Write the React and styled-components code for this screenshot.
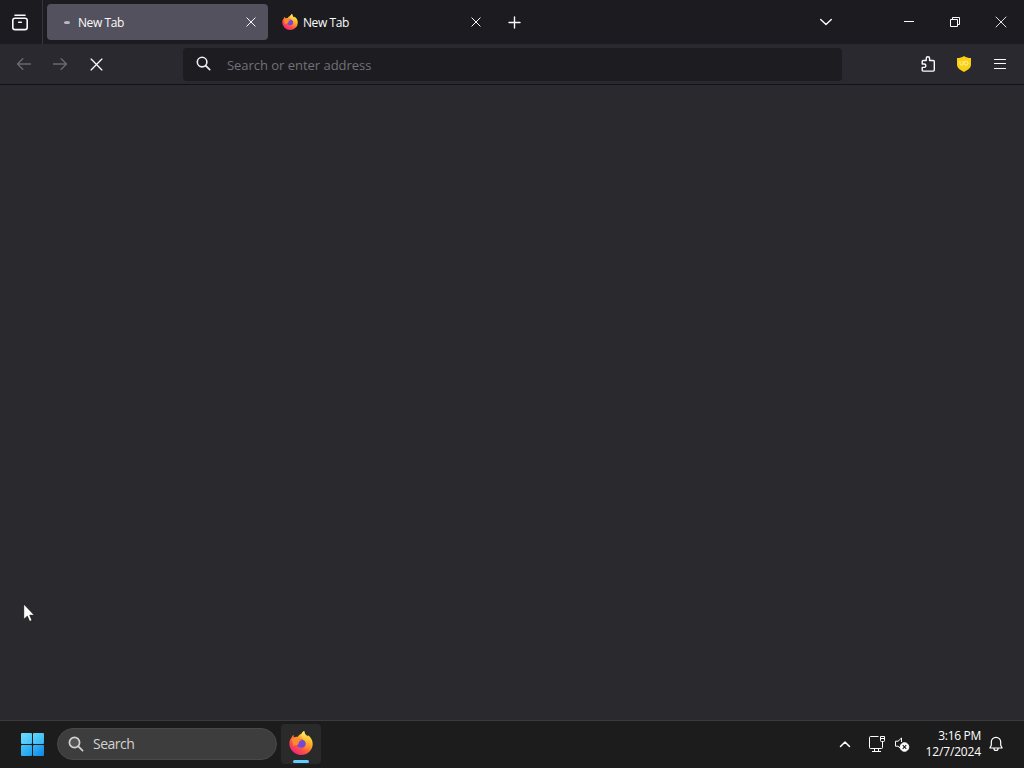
import React from 'react'
import styled, {createGlobalStyle} from 'styled-components'

const GlobalStyle = createGlobalStyle`
    * {
        box-sizing: border-box;
    }

    body {
        margin: 0;
        background: #2a292e;
        font-family: "Open Sans", "Noto Sans", sans-serif;
        overflow: hidden;
    }

    svg {
        display: block;
        flex: none;
    }
`

const Screen = styled.div`
    width: 1024px;
    height: 768px;
    display: flex;
    flex-direction: column;
    background: #2a292e;
`

const TabBar = styled.div`
    display: flex;
    height: 44px;
    background: #1c1b1f;
`

const FirefoxView = styled.div`
    display: flex;
    width: 43px;
    padding: 14px 0 0 11px;
    border-right: 1px solid #36353f;
`

const Tab = styled.div`
    display: flex;
    align-items: center;
    width: 221px;
    height: 36px;
    margin: 4px 0 0 4px;
    padding: 0 12px 0 10px;
    border-radius: 4px;
    background: ${props => props.$active ? '#53515d' : 'transparent'};
    color: #fbfbfe;
`

const TabIcon = styled.span`
    display: flex;
    align-items: center;
    justify-content: center;
    width: 16px;
    height: 16px;
    margin-right: 5px;
`

const Throbber = styled.i`
    width: 6px;
    height: 3px;
    margin-left: 3px;
    border-radius: 50%;
    background: #b9b8c4;
`

const TabTitle = styled.span`
    flex: 1;
    font-size: 12px;
    line-height: 18px;
    padding-top: 1px;
    letter-spacing: -0.42px;
`

const BarButton = styled.div`
    display: flex;
    align-items: center;
    justify-content: center;
    width: ${props => props.$width || 36}px;
    height: ${props => props.$height || 44}px;
    color: ${props => props.$muted ? '#69686f' : '#fbfbfe'};
`

const Spacer = styled.div`
    flex: 1;
`

const Toolbar = styled.div`
    display: flex;
    align-items: center;
    height: 41px;
    padding: 0 6px;
    background: #2a292f;
    border-bottom: 1px solid #131216;
`

const AddressBar = styled.div`
    display: flex;
    align-items: center;
    width: 659px;
    height: 33px;
    margin: 1px 0 0 69px;
    padding-left: 13px;
    border-radius: 4px;
    background: #1d1c21;
    color: #f0f0f4;

    svg {
        margin-bottom: 2px;
    }
`

const Placeholder = styled.span`
    margin-left: 16px;
    padding-top: 1px;
    font-size: 13px;
    line-height: 20px;
    letter-spacing: -0.03px;
    color: #727177;
`

const Page = styled.main`
    flex: 1;
    background: #2a292e;
`

const Taskbar = styled.footer`
    display: flex;
    height: 48px;
    padding-left: 21px;
    background: #1c1c1c;
    border-top: 1px solid #3b3b3f;
    color: #ffffff;
`

const StartLogo = styled.div`
    display: grid;
    grid-template-columns: 11px 11px;
    grid-template-rows: 11px 11px;
    gap: 1px;
    margin: 12px 13px 0 0;
`

const Pane = styled.i`
    border-radius: 1px;
    background: linear-gradient(135deg, ${props => props.$from}, ${props => props.$to});
`

const SearchBox = styled.div`
    display: flex;
    align-items: center;
    width: 220px;
    height: 32px;
    margin-top: 7px;
    padding: 0 0 1px 10px;
    border-radius: 16px;
    background: #3d3d3d;
    border: 1px solid #484848;
    color: #d2d2d2;
    font-size: 14px;
    letter-spacing: -0.5px;

    svg {
        margin-right: 9px;
    }
`

const TaskButton = styled.div`
    display: flex;
    flex-direction: column;
    align-items: center;
    width: 40px;
    height: 40px;
    margin: 3px 0 0 4px;
    padding-top: 7px;
    border-radius: 4px;
    background: #2a2a2a;
`

const Indicator = styled.i`
    width: 16px;
    height: 3px;
    margin-top: 5px;
    border-radius: 2px;
    background: #60cdff;
`

const Tray = styled.div`
    display: flex;
    align-items: center;
    padding: 0 20px 2px 0;
`

const TrayIcon = styled.span`
    margin-right: ${props => props.$gap}px;
`

const Clock = styled.div`
    width: 72px;
    margin-right: 7px;
    text-align: right;
    font-size: 12px;
    line-height: 16px;
    letter-spacing: -0.15px;
    white-space: nowrap;
`

const TimeText = styled.div`
    letter-spacing: -0.3px;
`

const Cursor = styled.svg`
    position: absolute;
    left: 23px;
    top: 603px;
`

const Cross = ({size, stroke = 1}) =>
    <svg width={size} height={size} viewBox="0 0 12 12" fill="none" stroke="currentColor" strokeWidth={stroke * 12 / size} strokeLinecap="round">
        <path d="M1 1l10 10M11 1L1 11" />
    </svg>

const Arrow = ({flip}) =>
    <svg width="16" height="16" viewBox="0 0 16 16" fill="none" stroke="currentColor" strokeWidth="1.4" strokeLinecap="round" strokeLinejoin="round">
        <path d={flip ? 'M1.5 8h13M9.2 2.700l5.300 5.300-5.300 5.300' : 'M14.500 8H1.500M6.800 2.700L1.500 8l5.300 5.300'} />
    </svg>

const Magnifier = ({size, fill = 'none'}) =>
    <svg width={size} height={size} viewBox="0 0 16 16" fill="none" stroke="currentColor" strokeWidth="1.7" strokeLinecap="round">
        <circle cx="6.5" cy="6.5" r="5.1" fill={fill} />
        <path d="M10.3 10.3l4.3 4.3" />
    </svg>

const FirefoxLogo = ({size, id}) =>
    <svg width={size} height={size} viewBox="0 0 24 24">
        <defs>
            <linearGradient id={`${id}-body`} x1="0.85" y1="0.1" x2="0.25" y2="0.95">
                <stop offset="0" stopColor="#fff04a" />
                <stop offset="0.35" stopColor="#ffa72a" />
                <stop offset="0.65" stopColor="#ff5a3c" />
                <stop offset="1" stopColor="#f0257b" />
            </linearGradient>
            <linearGradient id={`${id}-flame`} x1="0.6" y1="0" x2="0.5" y2="1">
                <stop offset="0" stopColor="#fff46a" />
                <stop offset="0.5" stopColor="#ffbd2e" />
                <stop offset="1" stopColor="#ff7a30" />
            </linearGradient>
        </defs>
        <path
            d="M4.7 4.1c-.2 1 0 1.900.1 2.500C6 5.900 7.300 5.700 8.500 6c1.200-2.200 3.100-2.900 4-3.300C13.200 1.200 14.300.5 15.200 0c.1 2.900 1.700 3.900 3.200 5.400.4-.5.4-1 .3-1.500 3.200 2 5 5.400 5 9A11.700 11 0 0 1 12 24 11.700 11.500 0 0 1 .4 12.500c0-3.400 1.400-5.100 2.400-6.300.3-1 .9-1.700 1.900-2.100z"
            fill={`url(#${id}-body)`}
        />
        <path
            d="M15.200 0c.1 2.900 1.700 3.900 3.200 5.400 2.200 2.200 3 5.400 1.900 8.500-1.100 3.300-4.100 5.200-7.400 5.100 3.500-1.300 5.400-4.300 4.500-7.100C16.500 8.800 12.300 8 12.300 4.200 12.400 2.500 13.500 1 15.200 0z"
            fill={`url(#${id}-flame)`}
        />
        <path
            d="M7.500 10.500c.7-1.600 2.300-2.300 4.200-2.100 3 0 5 1.700 5 4.200 0 2.500-1.900 4.200-4.500 4.200s-4.700-1.700-4.700-4.200z"
            fill="#7448d8"
        />
        <path d="M3 8.200c1.700-1.500 3.800-1.900 5.700-1.200.8 1.300 2.100 1.500 3.900 1.600-.1 1.300-1.800 1.500-2.600 2.300-.8.9.2 1.800-1.200 2.800-1.500 1-3.400.1-4.400 1.500z" fill="#ff8a2c" />
    </svg>

const App = () =>
    <Screen>
        <GlobalStyle />
        <TabBar>
            <FirefoxView>
                <svg width="18" height="18" viewBox="0 0 18 18" fill="none" stroke="#fbfbfe" strokeWidth="1.600" strokeLinecap="round">
                    <path d="M4 1.200h10" />
                    <rect x="1.800" y="4.200" width="14.400" height="11.400" rx="2.200" />
                    <path d="M7.700 8.300h2.600" />
                </svg>
            </FirefoxView>
            <Tab $active>
                <TabIcon><Throbber /></TabIcon>
                <TabTitle>New Tab</TabTitle>
                <Cross size={10} />
            </Tab>
            <Tab>
                <TabIcon><FirefoxLogo size={16} id="tab" /></TabIcon>
                <TabTitle>New Tab</TabTitle>
                <Cross size={10} />
            </Tab>
            <BarButton $width={43}>
                <svg width="13" height="13" viewBox="0 0 13 13" stroke="currentColor" strokeWidth="1.400" strokeLinecap="round">
                    <path d="M6.500 1v11M1 6.500h11" />
                </svg>
            </BarButton>
            <Spacer />
            <BarButton $width={120}>
                <svg width="14" height="8" viewBox="0 0 14 8" fill="none" stroke="currentColor" strokeWidth="1.400" strokeLinecap="round" strokeLinejoin="round">
                    <path d="M1.700 1.500L7 6.500l5.300-5" />
                </svg>
            </BarButton>
            <BarButton $width={46}>
                <svg width="10" height="11" viewBox="0 0 10 11" stroke="currentColor">
                    <path d="M0 4.500h10" />
                </svg>
            </BarButton>
            <BarButton $width={46}>
                <svg width="12" height="12" viewBox="0 0 12 12" fill="none" stroke="currentColor">
                    <path d="M1.500 3.500h7v7h-7zM3.500 3.500v-2h7v7h-2" />
                </svg>
            </BarButton>
            <BarButton $width={46}><Cross size={12} stroke={0.9} /></BarButton>
        </TabBar>
        <Toolbar>
            <BarButton $height={40} $muted><Arrow /></BarButton>
            <BarButton $height={40} $muted><Arrow flip /></BarButton>
            <BarButton $height={40}><Cross size={13} stroke={1.3} /></BarButton>
            <AddressBar>
                <Magnifier size={15} />
                <Placeholder>Search or enter address</Placeholder>
            </AddressBar>
            <Spacer />
            <BarButton $height={40}>
                <svg width="16" height="18" viewBox="0 0 16 18" fill="none" stroke="currentColor" strokeWidth="1.400" strokeLinejoin="round">
                    <path d="M2.200 9V6.500q0-1 1-1H6.200V3.500a1.700 1.700 0 0 1 3.400 0v2h3.700q1 0 1 1v8.600q0 1-1 1H3.200q-1 0-1-1v-2.700h2a1.700 1.700 0 0 0 0-3.400z" />
                </svg>
            </BarButton>
            <BarButton $height={40}>
                <svg width="16" height="16" viewBox="0 0 16 16" fill="none">
                    <path d="M8 0c2 1.500 4.300 2 7 2v6.500c0 3.500-3.500 5.800-7 7.500-3.500-1.700-7-4-7-7.500V2c2.700 0 5-.5 7-2z" fill="#fbd012" />
                    <path d="M4 5v2.700q0 1.500 1.500 1.500T7 7.700V5" stroke="#fff4a8" />
                    <circle cx="10" cy="7.200" r="2" stroke="#fff4a8" />
                </svg>
            </BarButton>
            <BarButton $height={40}>
                <svg width="14" height="12" viewBox="0 0 14 12" stroke="currentColor" strokeWidth="1.200" strokeLinecap="round">
                    <path d="M1.500 1.500h11M1.500 5.500h11M1.500 10.500h11" />
                </svg>
            </BarButton>
        </Toolbar>
        <Page />
        <Taskbar>
            <StartLogo>
                <Pane $from="#6fe0fc" $to="#42bdf5" />
                <Pane $from="#62d8fb" $to="#35b3f3" />
                <Pane $from="#43c3f7" $to="#1e9eee" />
                <Pane $from="#38b7f5" $to="#0c86e6" />
            </StartLogo>
            <SearchBox>
                <Magnifier size={16} fill="#555555" />
                Search
            </SearchBox>
            <TaskButton>
                <FirefoxLogo size={24} id="task" />
                <Indicator />
            </TaskButton>
            <Spacer />
            <Tray>
                <TrayIcon $gap={17}>
                    <svg width="12" height="8" viewBox="0 0 12 8" fill="none" stroke="currentColor" strokeWidth="1.500" strokeLinecap="round" strokeLinejoin="round">
                        <path d="M1.500 6.500L6 2l4.500 4.500" />
                    </svg>
                </TrayIcon>
                <TrayIcon $gap={8}>
                    <svg width="18" height="18" viewBox="0 0 18 18" fill="none" stroke="currentColor">
                        <path d="M10.500 1.500h-8q-1 0-1 1v10q0 1 1 1h11q1 0 1-1V7M6.500 13.500v3M10.500 13.500v3M4 16.500h9" />
                        <path d="M12.500 1.500h4v4q0 1-1 1h-2q-1 0-1-1zM12.500 3.500h4M14.500 6.500v2" />
                    </svg>
                </TrayIcon>
                <TrayIcon $gap={-1}>
                    <svg width="16" height="16" viewBox="0 0 16 16" fill="none" stroke="currentColor" strokeLinejoin="round">
                        <path d="M7.500 6V2L4 5.200H1.500v5H4L6 12" />
                        <circle cx="10.500" cy="11" r="4.300" fill="#ffffff" />
                        <path d="M8.700 9.200l3.600 3.600M12.300 9.200l-3.600 3.600" stroke="#1c1c1c" strokeWidth="1.100" />
                    </svg>
                </TrayIcon>
                <Clock>
                    <TimeText>3:16 PM</TimeText>
                    <div>12/7/2024</div>
                </Clock>
                <svg width="16" height="16" viewBox="0 0 16 16" fill="none" stroke="currentColor" strokeWidth="1.200" strokeLinecap="round" strokeLinejoin="round">
                    <path d="M8 1.300a4.700 4.700 0 0 0-4.700 4.700v3.200L1.900 12h12.200l-1.400-2.800V6A4.700 4.700 0 0 0 8 1.300zM6 12.500a2 2 0 0 0 4 0" />
                </svg>
            </Tray>
        </Taskbar>
        <Cursor width="13" height="20" viewBox="0 0 13 20">
            <path d="M.7.900v15.600l3.600-3.300 2.300 5.300 2.500-1.100-2.300-5.100h4.700z" fill="#ffffff" stroke="#111111" strokeWidth=".8" />
        </Cursor>
    </Screen>

export default App
